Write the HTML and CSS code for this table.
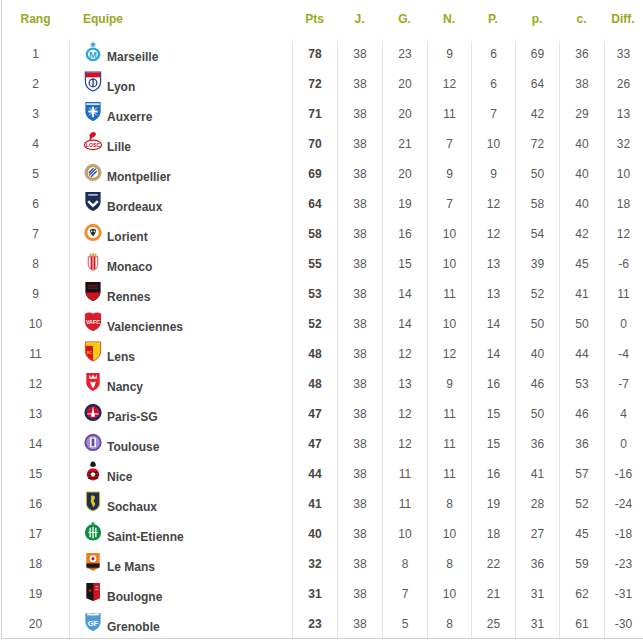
FILE: index.html
```html
<!DOCTYPE html>
<html lang="fr">
<head>
<meta charset="utf-8">
<title>Classement Ligue 1</title>
<link rel="stylesheet" href="styles.css">
</head>
<body>
<div class="standings">
  <div class="row head">
    <div class="c">Rang</div><div class="c team">Equipe</div><div class="c">Pts</div><div class="c">J.</div><div class="c">G.</div><div class="c">N.</div><div class="c">P.</div><div class="c">p.</div><div class="c">c.</div><div class="c">Diff.</div>
  </div>
  <div id="body"></div>
</div>
<script src="app.js"></script>
</body>
</html>
```
FILE: styles.css
```css
html, body { margin: 0; padding: 0; background: #fff; }
body { font-family: "Liberation Sans", Arial, sans-serif; font-size: 12px; color: #595959; }
.standings { margin-left: 1px; width: 642px; border-left: 1px solid #cfcfcf; border-bottom: 1px solid #d2d2d2; box-sizing: border-box; }
.row { display: grid; grid-template-columns: 67px 223px 45px 45px 45px 44px 44px 44px 45px 38px; height: 30px; }
.row.head { height: 38px; }
.c { display: flex; align-items: center; justify-content: center; box-sizing: border-box; }
.body-row .c { padding-top: 1px; }
.head .c { font-weight: bold; color: #95ab1e; font-size: 12px; }
.head .c.team { justify-content: flex-start; padding-left: 14px; }
.body-row .c + .c { border-left: 1px solid #e4e4e4; }
.body-row:first-child .c + .c { border-image: linear-gradient(to bottom, #fff 0, #e4e4e4 8px) 1; }
.body-row .c.team { justify-content: flex-start; align-items: flex-end; padding: 0 0 5px 13px; }
.logo { width: 20px; height: 21px; flex: none; display: block; margin-bottom: 1px; }
.name { font-weight: bold; color: #454545; line-height: 14px; margin-left: 4px; margin-bottom: -1px; }
.pts { font-weight: bold; color: #454545; }
```
FILE: app.js
```js
var S = "M2 1H18V11C18 16 14 19.5 10 21C6 19.5 2 16 2 11Z";
var logos = {
  om: '<path d="M10 0.5l1 2.2 2.3.2-1.8 1.5.6 2.2-2.1-1.2-2.1 1.2.6-2.2-1.8-1.5 2.3-.2z" fill="#2ea3d6"/><ellipse cx="10" cy="14" rx="6.5" ry="6" fill="none" stroke="#2ea3d6" stroke-width="2.4"/><text x="10" y="18" font-size="10" font-weight="bold" font-family="Liberation Sans" text-anchor="middle" fill="#2ea3d6">M</text>',
  ol: '<path d="'+S+'" fill="#fff" stroke="#1c3f94" stroke-width="1.2"/><rect x="2.6" y="1.6" width="14.8" height="5" fill="#d6111e"/><circle cx="10" cy="12.5" r="4" fill="none" stroke="#1c3f94" stroke-width="1.3"/><rect x="9.3" y="8" width="1.4" height="9" fill="#1c3f94"/>',
  aja: '<path d="'+S+'" fill="#1c6cc4"/><rect x="3" y="2.5" width="14" height="1.5" fill="#fff"/><rect x="9" y="6" width="2" height="11" fill="#fff"/><rect x="5" y="10" width="10" height="2" fill="#fff"/><path d="M6 7l8 8M14 7l-8 8" stroke="#fff" stroke-width="1"/>',
  losc: '<path d="M8 2c2-1.5 5-1 5 1.5 0 2-2 3-4 3.5l-1 2h-2l1-3c-1 0-1.5-2 1-4z" fill="#d6111e"/><ellipse cx="10" cy="14.5" rx="9" ry="5" fill="#fff" stroke="#d6111e" stroke-width="1.3"/><text x="10" y="16.5" font-size="5.5" font-weight="bold" font-family="Liberation Sans" text-anchor="middle" fill="#d6111e">LOSC</text>',
  mhsc: '<circle cx="10" cy="12" r="9" fill="#a9adb2"/><circle cx="10" cy="12" r="7" fill="#f08a00"/><circle cx="10" cy="12" r="5.6" fill="#fff"/><path d="M6 15l7-7M8 16.5l6-6M5.5 12.5l5-5" stroke="#1b4f9c" stroke-width="1.4"/>',
  fcgb: '<path d="'+S+'" fill="#1c2d5a"/><rect x="5" y="3.5" width="10" height="1.2" fill="#fff"/><path d="M5 10.5l5 5 5-5" fill="none" stroke="#fff" stroke-width="2.6"/>',
  fcl: '<circle cx="10" cy="12" r="9" fill="#f28c28"/><circle cx="10" cy="12" r="6" fill="#fff"/><path d="M6.5 10c2-2 5-2 7 0-1 3-2 5-3.5 6-1.5-1-2.5-3-3.5-6z" fill="#2b2b2b"/><circle cx="8.5" cy="10.8" r="0.9" fill="#fff"/><circle cx="11.5" cy="10.8" r="0.9" fill="#fff"/>',
  asm: '<path d="M6 5l1-3 1.5 2L10 1.5 11.5 4 13 2l1 3z" fill="#c8a24a"/><path d="M5 6h10v8c0 3-2.5 5.5-5 7-2.5-1.5-5-4-5-7z" fill="#fff" stroke="#c41e2a" stroke-width="0.8"/><path d="M7.5 6h5v12l-2.5 3-2.5-3z" fill="#d6111e"/><path d="M10 6v15" stroke="#fff" stroke-width="1"/>',
  srfc: '<path d="'+S+'" fill="#151515"/><path d="M2.5 12h15c-.5 4-3.5 7-7.5 8.5C6 19 3 16 2.5 12z" fill="#d6111e"/><path d="M5 5h10M5 7.5h10" stroke="#d6111e" stroke-width="0.8"/>',
  vafc: '<path d="M1.5 3c3-2 6-2 8.5 0 2.5-2 5.5-2 8.5 0V11c0 5-4 8.5-8.5 10C5.5 19.5 1.5 16 1.5 11z" fill="#d81e2a"/><text x="10" y="13.5" font-size="5.6" font-weight="bold" font-family="Liberation Sans" text-anchor="middle" fill="#fff">VAFC</text>',
  rcl: '<path d="'+S+'" fill="#f5cf16" stroke="#d9111b" stroke-width="0.8"/><path d="M2.5 5h7.5v15.5C6 19 2.8 16 2.5 11z" fill="#d9111b"/><rect x="2.5" y="1.5" width="15" height="3" fill="#f5cf16"/><text x="6.2" y="14" font-size="4" font-weight="bold" font-family="Liberation Sans" text-anchor="middle" fill="#f5cf16">RC</text>',
  asnl: '<path d="M3 2h14v10c0 4-3 7-7 9-4-2-7-5-7-9z" fill="#e4212c"/><path d="M6 4l2 3 2-3 2 3 2-3v4H6z" fill="#fff"/><path d="M7 11c2 1 4 1 6 0-1 3-1 5-3 7-2-2-2-4-3-7z" fill="#fff"/>',
  psg: '<circle cx="10" cy="12" r="9" fill="#1b2a58"/><circle cx="10" cy="12" r="6.5" fill="#c8102e"/><path d="M10 5.5l2 11h-4z" fill="#fff"/><rect x="4" y="13" width="12" height="1" fill="#fff"/>',
  tfc: '<circle cx="10" cy="12" r="9" fill="#6a4c9c"/><circle cx="10" cy="12" r="7" fill="#a78bd6"/><path d="M7 7h6v10H7z" fill="#fff"/><path d="M8.5 8h3v8h-3z" fill="#6a4c9c"/>',
  ogcn: '<path d="M7 5c0-3 1.5-4.5 3-4.5S13 2 13 5l-1.5 1h-3z" fill="#151515"/><circle cx="10" cy="14" r="6.5" fill="#d6111e"/><path d="M5 12h10M4 15h12M5 18h10" stroke="#151515" stroke-width="1.4"/><circle cx="10" cy="14" r="2.3" fill="#fff"/>',
  fcsm: '<path d="M3 1h14v12c0 4-3 6.5-7 8-4-1.5-7-4-7-8z" fill="#1e2f5a" stroke="#e6c217" stroke-width="1"/><path d="M8 5c2-1 4 0 4 2s-2 2-1 4 2 2 1 4l-2 2-1-3c-1-2-2-3-1-5z" fill="#e6c217"/>',
  asse: '<circle cx="10" cy="12" r="8.5" fill="#0b8b3d"/><path d="M7 7v10M10 6v12M13 7v10" stroke="#fff" stroke-width="1.4"/><path d="M5 12h10" stroke="#fff" stroke-width="1"/><path d="M8.5 1.5h3v2h-3z" fill="#0b8b3d"/>',
  lmfc: '<path d="M3 2h14v10c0 4-3 7-7 9-4-2-7-5-7-9z" fill="#f07c1c"/><circle cx="10" cy="8" r="3.5" fill="#fff"/><circle cx="10" cy="8" r="1.6" fill="#d6111e"/><path d="M3 13h14v4H3z" fill="#1a1a1a"/><path d="M3 17h14l-1 1H4z" fill="#1a1a1a"/>',
  usbco: '<path d="M3 2h14v16l-7 3-7-3z" fill="#151515"/><path d="M10.5 2H17v16l-6.5 2.8z" fill="#d6111e"/><circle cx="7" cy="10" r="1.6" fill="#d6111e"/><path d="M12.5 6h3M12.5 9h3" stroke="#fff" stroke-width="0.7"/>',
  gf38: '<path d="M2 2c2.5 1 5.5 1 8 0 2.5 1 5.5 1 8 0v9c0 5-4 8.5-8 10-4-1.5-8-5-8-10z" fill="#4c9ad6"/><rect x="4" y="3" width="12" height="1.6" fill="#fff"/><text x="10" y="15.5" font-size="8" font-weight="bold" font-family="Liberation Sans" text-anchor="middle" fill="#fff">GF</text>'
};
var data = [
  ["Marseille","om",78,38,23,9,6,69,36,33],
  ["Lyon","ol",72,38,20,12,6,64,38,26],
  ["Auxerre","aja",71,38,20,11,7,42,29,13],
  ["Lille","losc",70,38,21,7,10,72,40,32],
  ["Montpellier","mhsc",69,38,20,9,9,50,40,10],
  ["Bordeaux","fcgb",64,38,19,7,12,58,40,18],
  ["Lorient","fcl",58,38,16,10,12,54,42,12],
  ["Monaco","asm",55,38,15,10,13,39,45,-6],
  ["Rennes","srfc",53,38,14,11,13,52,41,11],
  ["Valenciennes","vafc",52,38,14,10,14,50,50,0],
  ["Lens","rcl",48,38,12,12,14,40,44,-4],
  ["Nancy","asnl",48,38,13,9,16,46,53,-7],
  ["Paris-SG","psg",47,38,12,11,15,50,46,4],
  ["Toulouse","tfc",47,38,12,11,15,36,36,0],
  ["Nice","ogcn",44,38,11,11,16,41,57,-16],
  ["Sochaux","fcsm",41,38,11,8,19,28,52,-24],
  ["Saint-Etienne","asse",40,38,10,10,18,27,45,-18],
  ["Le Mans","lmfc",32,38,8,8,22,36,59,-23],
  ["Boulogne","usbco",31,38,7,10,21,31,62,-31],
  ["Grenoble","gf38",23,38,5,8,25,31,61,-30]
];
var html = "";
data.forEach(function (r, i) {
  html += '<div class="row body-row"><div class="c">' + (i + 1) + '</div>' +
    '<div class="c team"><svg class="logo" viewBox="0 0 20 22">' + logos[r[1]] + '</svg><span class="name">' + r[0] + '</span></div>' +
    '<div class="c pts">' + r[2] + '</div>';
  for (var k = 3; k < 10; k++) html += '<div class="c">' + r[k] + '</div>';
  html += '</div>';
});
document.getElementById("body").innerHTML = html;
```
